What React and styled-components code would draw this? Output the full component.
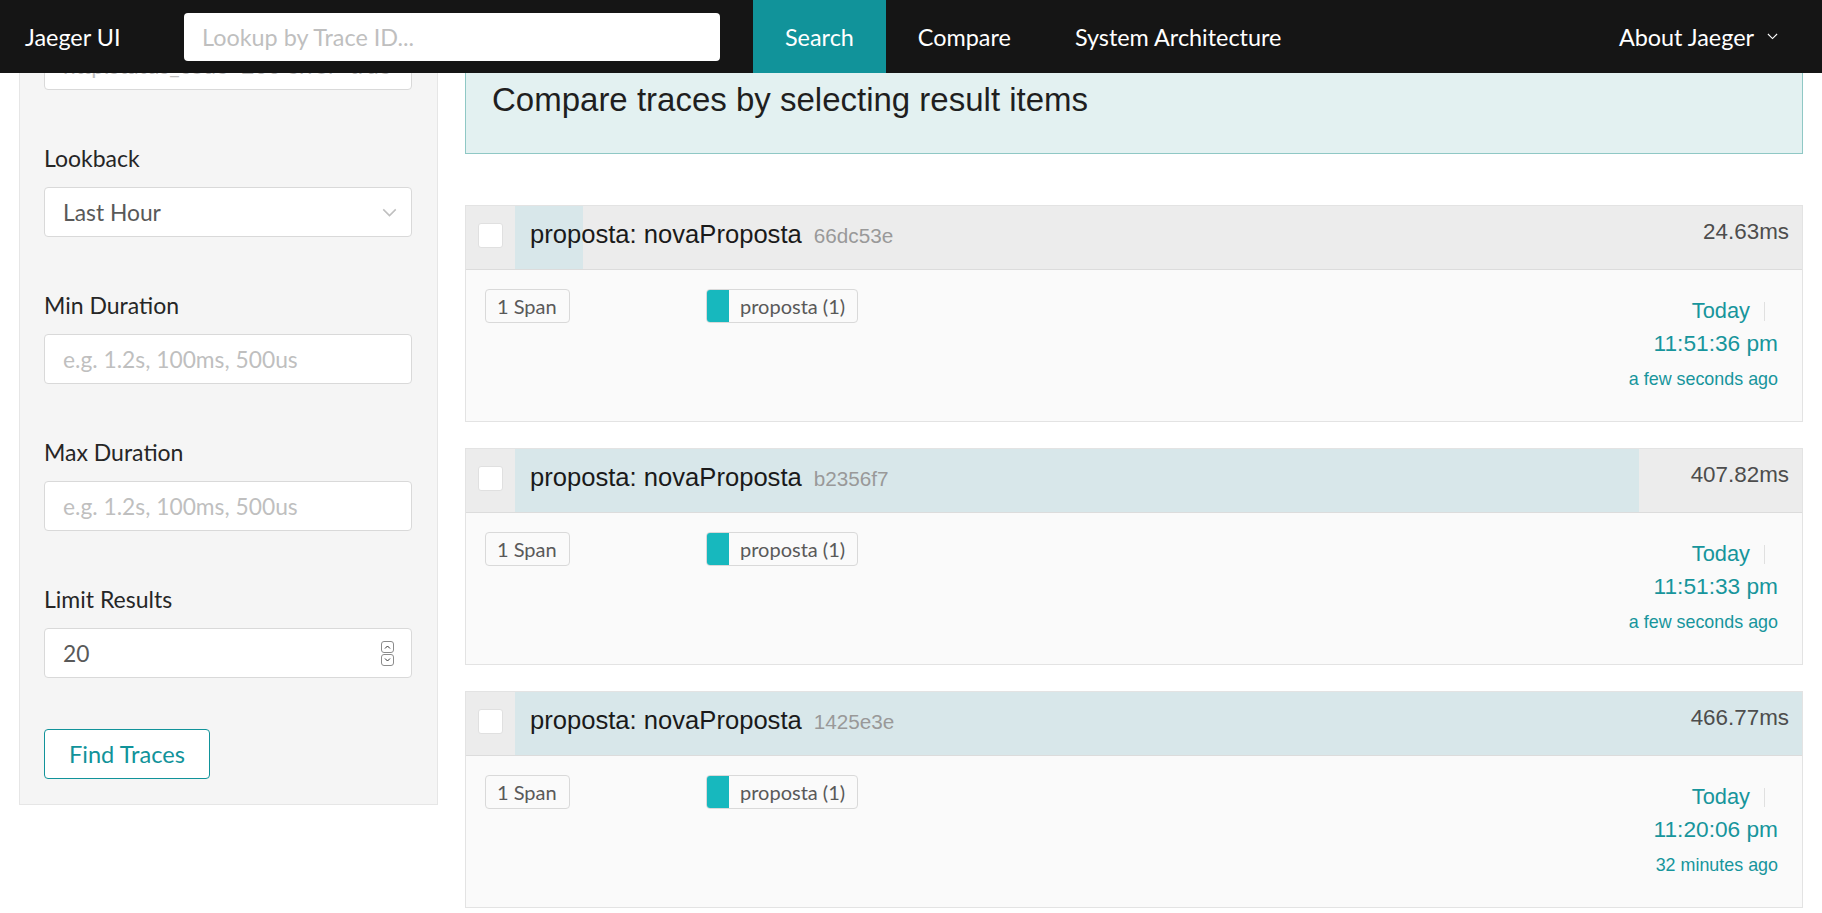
import React from "react"
import styled, { createGlobalStyle } from "styled-components"

const GlobalStyle = createGlobalStyle`
    html, body {
        margin: 0;
        padding: 0;
        height: 100%;
        overflow: hidden;
        background: #fff;
    }
    * { box-sizing: border-box; }
`

const teal = "#11939a"
const uiFont = `Lato, "Open Sans", sans-serif`
const textFont = `"Liberation Sans", Arial, sans-serif`

const Page = styled.div`
    height: 100vh;
    display: flex;
    flex-direction: column;
`

/* ---------- top nav ---------- */

const Nav = styled.nav`
    height: 73px;
    flex: none;
    background: #151515;
    display: flex;
    align-items: stretch;
    font-family: ${uiFont};
    font-size: 23.4px;
    color: #fff;
    position: relative;
    z-index: 2;
`
const Brand = styled.div`
    display: flex;
    align-items: center;
    padding: 0 0 0 25px;
    width: 184px;
`
const LookupBox = styled.div`
    display: flex;
    align-items: center;
    width: 569px;
`
const Lookup = styled.div`
    width: 536px;
    height: 48px;
    background: #fff;
    border-radius: 4px;
    display: flex;
    align-items: center;
    padding-left: 18px;
    color: #bfbfbf;
    font-size: 23.4px;
`
const NavItem = styled.div`
    display: flex;
    align-items: center;
    padding: 0 32px;
    background: ${(p) => (p.$active ? teal : "transparent")};
`
const NavSpacer = styled.div`
    flex: 1;
`
const NavRight = styled.div`
    display: flex;
    align-items: center;
    gap: 13px;
    padding-right: 44px;
`

/* ---------- body ---------- */

const Body = styled.div`
    flex: 1;
    display: flex;
    align-items: flex-start;
    overflow: hidden;
    padding: 0 19px;
    gap: 27px;
`

const Sidebar = styled.aside`
    width: 419px;
    flex: none;
    margin-top: -103px;
    background: #f5f5f5;
    border: 1px solid #e6e6e6;
    padding: 25px 25px 25px 24px;
    font-family: ${uiFont};
`
const Field = styled.div`
    margin-bottom: ${(p) => p.$gap || 53}px;
`
const Label = styled.div`
    height: 30px;
    line-height: 30px;
    font-size: 23px;
    color: #262626;
    margin-bottom: 14px;
`
const InputBox = styled.div`
    height: 50px;
    background: #fff;
    border: 1px solid #d9d9d9;
    border-radius: 4px;
    display: flex;
    align-items: center;
    justify-content: space-between;
    padding: 0 14px 0 18px;
    font-size: 22.8px;
    color: ${(p) => (p.$placeholder ? "#bfbfbf" : "#595959")};
    white-space: nowrap;
    overflow: hidden;
`
const Spinner = styled.div`
    display: flex;
    flex-direction: column;
    gap: 1px;
    margin-right: 3px;
`
const SpinBtn = styled.div`
    width: 13px;
    height: 12px;
    border: 1px solid #8c8c8c;
    border-radius: 3px;
    display: flex;
    align-items: center;
    justify-content: center;
`
const FindButton = styled.button`
    height: 50px;
    padding: 0 24px;
    background: #fff;
    border: 1px solid ${teal};
    border-radius: 4px;
    color: ${teal};
    font-family: ${uiFont};
    font-size: 23.6px;
`

const Main = styled.main`
    flex: 1;
    margin-top: -19px;
    display: flex;
    flex-direction: column;
    gap: 26px;
`
const Alert = styled.div`
    background: #e3f1f1;
    border: 1px solid #8fc8c5;
    padding: 20px 24px 28px 26px;
    margin-bottom: 25px;
    font-family: ${textFont};
    font-size: 33px;
    line-height: 50px;
    color: #1f1f1f;
`

const Trace = styled.div`
    border: 1px solid #e3e3e3;
    background: #fafafa;
`
const TraceHeader = styled.div`
    height: 64px;
    display: flex;
    border-bottom: 1px solid #dcdcdc;
    font-family: ${textFont};
`
const CheckCell = styled.div`
    width: 49px;
    flex: none;
    background: #ececec;
    display: flex;
    align-items: center;
    justify-content: center;
    padding-bottom: 4px;
`
const Check = styled.div`
    width: 25px;
    height: 25px;
    background: #fff;
    border: 1px solid #e0e0e0;
    border-radius: 3px;
`
const TitleBar = styled.div`
    flex: 1;
    display: flex;
    align-items: center;
    padding: 0 13px 7px 15px;
    background: linear-gradient(
        to right,
        #d8e7ea ${(p) => p.$pct}%,
        #ececec ${(p) => p.$pct}%
    );
`
const TraceName = styled.span`
    font-size: 25.6px;
    color: #1a1a1a;
`
const TraceId = styled.span`
    font-size: 20.7px;
    color: #999;
    margin-left: 12px;
    padding-top: 3px;
`
const Duration = styled.span`
    margin-left: auto;
    font-size: 22.4px;
    color: #4d4d4d;
    padding-bottom: 4px;
`

const TraceBody = styled.div`
    height: 151px;
    display: grid;
    grid-template-columns: 221px 1fr auto;
    padding: 19px 24px 0 19px;
`
const Tags = styled.div`
    display: flex;
    align-items: flex-start;
`
const Tag = styled.div`
    height: 34px;
    display: flex;
    align-items: stretch;
    border: 1px solid #d9d9d9;
    border-radius: 4px;
    background: #fafafa;
    font-family: ${uiFont};
    font-size: 20px;
    color: #595959;
    overflow: hidden;
`
const Swatch = styled.span`
    width: 22px;
    background: ${(p) => p.$color};
`
const TagText = styled.span`
    display: flex;
    align-items: center;
    padding: 0 12px 0 11px;
`
const When = styled.div`
    display: flex;
    flex-direction: column;
    align-items: flex-end;
    font-family: ${textFont};
    color: #17959c;
    padding-top: 10px;
`
const Day = styled.div`
    display: flex;
    align-items: center;
    font-size: 21.8px;
    line-height: 24px;
    padding-right: 13px;
    &::after {
        content: "";
        width: 1px;
        height: 19px;
        background: #e0e0e0;
        margin-left: 14px;
    }
`
const Time = styled.div`
    font-size: 22.7px;
    line-height: 26px;
    margin-top: 7px;
`
const Ago = styled.div`
    font-size: 17.9px;
    line-height: 20px;
    margin-top: 13px;
`

const Chevron = ({ size = 12, color = "#fff" }) => (
    <svg width={size} height={size * 0.6} viewBox="0 0 12 7" fill="none">
        <path d="M1 1l5 5 5-5" stroke={color} strokeWidth="1.2" />
    </svg>
)

const traces = [
    { id: "66dc53e", ms: 24.63, when: "11:51:36 pm", ago: "a few seconds ago" },
    { id: "b2356f7", ms: 407.82, when: "11:51:33 pm", ago: "a few seconds ago" },
    { id: "1425e3e", ms: 466.77, when: "11:20:06 pm", ago: "32 minutes ago" },
]
const maxMs = Math.max(...traces.map((t) => t.ms))

const App = () => {
    return (
        <Page>
            <GlobalStyle />
            <Nav>
                <Brand>Jaeger UI</Brand>
                <LookupBox>
                    <Lookup>Lookup by Trace ID...</Lookup>
                </LookupBox>
                <NavItem $active>Search</NavItem>
                <NavItem>Compare</NavItem>
                <NavItem>System Architecture</NavItem>
                <NavSpacer />
                <NavRight>
                    About Jaeger
                    <Chevron size={11} />
                </NavRight>
            </Nav>
            <Body>
                <Sidebar>
                    <Field>
                        <Label>Tags</Label>
                        <InputBox $placeholder>http.status_code=200 error=true</InputBox>
                    </Field>
                    <Field>
                        <Label>Lookback</Label>
                        <InputBox>
                            Last Hour
                            <Chevron size={15} color="#bfbfbf" />
                        </InputBox>
                    </Field>
                    <Field>
                        <Label>Min Duration</Label>
                        <InputBox $placeholder>e.g. 1.2s, 100ms, 500us</InputBox>
                    </Field>
                    <Field>
                        <Label>Max Duration</Label>
                        <InputBox $placeholder>e.g. 1.2s, 100ms, 500us</InputBox>
                    </Field>
                    <Field $gap={51}>
                        <Label>Limit Results</Label>
                        <InputBox>
                            20
                            <Spinner>
                                <SpinBtn>
                                    <svg width="7" height="4" viewBox="0 0 7 4"><path d="M1 3.5l2.5-2.5 2.5 2.5" stroke="#333" fill="none" /></svg>
                                </SpinBtn>
                                <SpinBtn>
                                    <svg width="7" height="4" viewBox="0 0 7 4"><path d="M1 .5l2.5 2.5 2.5-2.5" stroke="#333" fill="none" /></svg>
                                </SpinBtn>
                            </Spinner>
                        </InputBox>
                    </Field>
                    <FindButton>Find Traces</FindButton>
                </Sidebar>
                <Main>
                    <Alert>Compare traces by selecting result items</Alert>
                    {traces.map((t) => (
                        <Trace key={t.id}>
                            <TraceHeader>
                                <CheckCell>
                                    <Check />
                                </CheckCell>
                                <TitleBar $pct={((t.ms / maxMs) * 100).toFixed(2)}>
                                    <TraceName>proposta: novaProposta</TraceName>
                                    <TraceId>{t.id}</TraceId>
                                    <Duration>{t.ms.toFixed(2)}ms</Duration>
                                </TitleBar>
                            </TraceHeader>
                            <TraceBody>
                                <Tags>
                                    <Tag>
                                        <TagText>1 Span</TagText>
                                    </Tag>
                                </Tags>
                                <Tags>
                                    <Tag>
                                        <Swatch $color="#17b8be" />
                                        <TagText>proposta (1)</TagText>
                                    </Tag>
                                </Tags>
                                <When>
                                    <Day>Today</Day>
                                    <Time>{t.when}</Time>
                                    <Ago>{t.ago}</Ago>
                                </When>
                            </TraceBody>
                        </Trace>
                    ))}
                </Main>
            </Body>
        </Page>
    )
}

export default App
